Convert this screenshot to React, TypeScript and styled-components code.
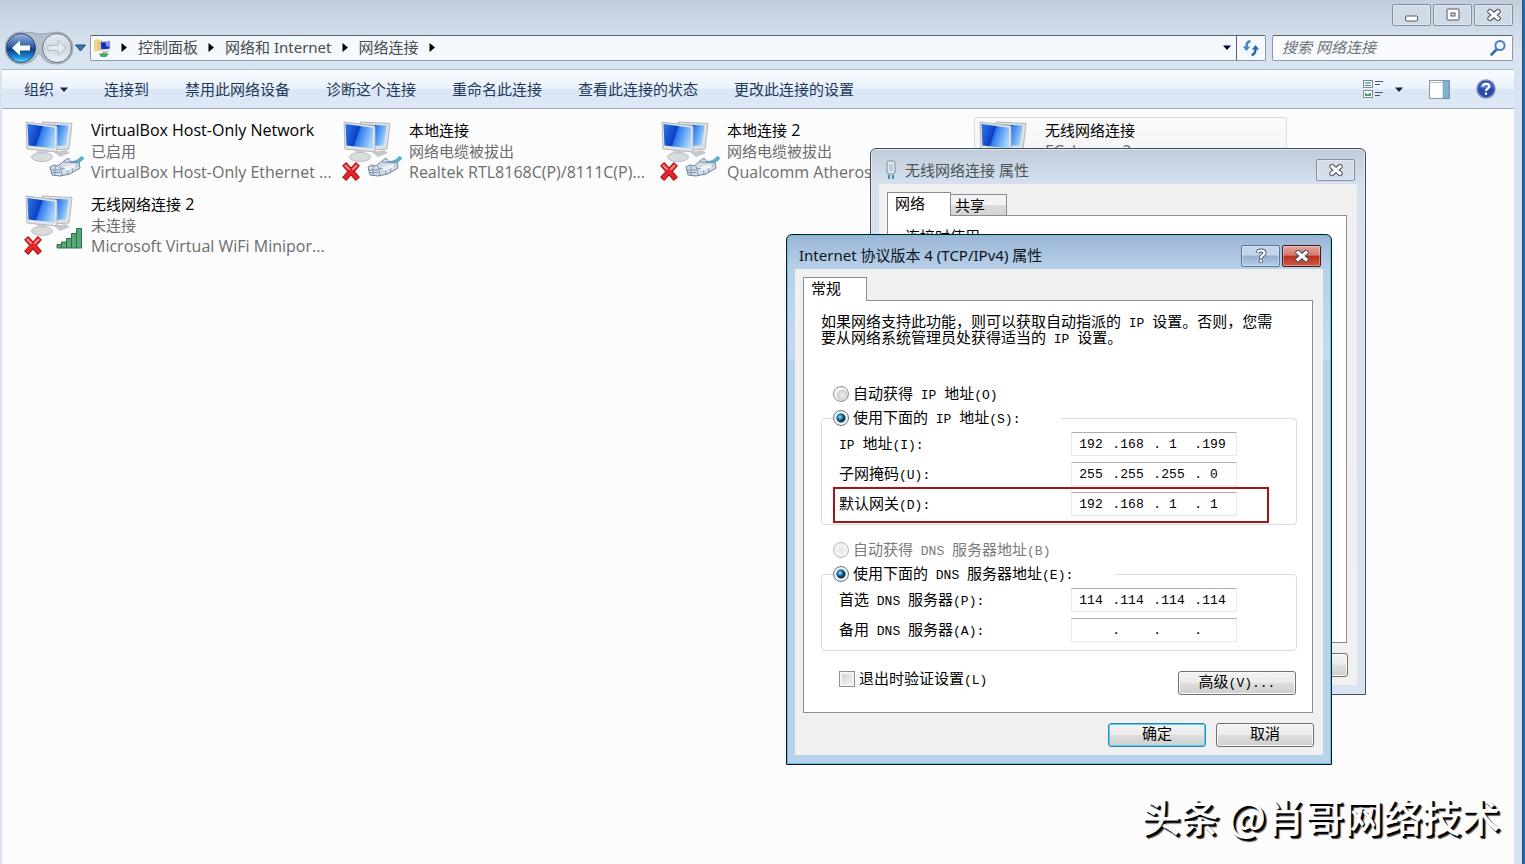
import React from "react";
import styled, { createGlobalStyle, css } from "styled-components";

const UI_FONT = `"Noto Sans", "Noto Sans CJK SC", sans-serif`;

const GlobalStyle = createGlobalStyle`
  * { box-sizing: border-box; }
  body {
    margin: 0;
    font: 15px/21px ${UI_FONT};
    color: #000;
    background: #1a6bb5;
  }
  button, input { font: inherit; color: inherit; margin: 0; padding: 0; }
`;

/* ---------- explorer window ---------- */

const Desktop = styled.div`
  position: relative;
  min-height: 100vh;
  display: flex;
  overflow: hidden;
`;

const Explorer = styled.div`
  flex: 1;
  display: flex;
  flex-direction: column;
  padding: 0 8px 0 2px;
  margin-right: 2px;
  border-right: 1px solid #3d4f63;
  background: linear-gradient(#c1cddb 0, #cbd7e4 20px, #d9e4f1 50px, #d6e3f2 110px);
`;

const CaptionBar = styled.div`
  display: flex;
  justify-content: flex-end;
  gap: 2px;
  padding: 4px 1px 0 0;
  height: 30px;
`;

const CaptionButton = styled.button<{ $tone?: "plain" | "active" | "danger" }>`
  width: 39px;
  height: 22px;
  display: flex;
  align-items: center;
  justify-content: center;
  border-radius: 2px;
  border: 1px solid #8290a4;
  background: linear-gradient(rgba(255, 255, 255, 0.25), rgba(255, 255, 255, 0.05));
  box-shadow: inset 0 0 0 1px rgba(255, 255, 255, 0.35);
  ${(p) =>
    p.$tone === "active" &&
    css`
      border-color: #5a7393;
      background: linear-gradient(#c3d6eb 0 45%, #94b0d0 50%, #b4cfeb);
    `}
  ${(p) =>
    p.$tone === "danger" &&
    css`
      border-color: #431d22;
      background: linear-gradient(#e3a69b 0, #d27a6c 46%, #b92f1f 50%, #cf5a42);
    `}
`;

const NavRow = styled.div`
  display: flex;
  align-items: center;
  height: 39px;
  padding: 0 1px 4px 3px;
`;

const NavButtons = styled.div`
  display: flex;
  align-items: center;
  width: 85px;
`;

const GhostButton = styled.button`
  display: flex;
  border: 0;
  background: none;
`;

const AddressBar = styled.div`
  flex: 1;
  display: flex;
  align-items: center;
  height: 26px;
  border: 1px solid #8d9aa9;
  border-top-color: #56606b;
  border-radius: 2px;
  background: #f5f8fc;
`;

const Crumbs = styled.nav`
  flex: 1;
  display: flex;
  align-items: center;
  padding-left: 2px;
`;

const Crumb = styled.a`
  color: #474c52;
  text-decoration: none;
  white-space: nowrap;
`;

const Arrow = styled.svg`
  width: 7px;
  height: 9px;
  margin: 0 10px;
  flex: none;
`;

const HistoryButton = styled(GhostButton)`
  padding-right: 5px;
`;

const RefreshButton = styled(GhostButton)`
  width: 29px;
  height: 24px;
  align-items: center;
  justify-content: center;
  border-left: 1px solid #56606b;
`;

const SearchBox = styled.label`
  width: 241px;
  height: 26px;
  margin-left: 6px;
  padding: 0 5px 0 9px;
  display: flex;
  align-items: center;
  border: 1px solid #8d9aa9;
  border-top-color: #56606b;
  border-radius: 2px;
  background: #f8fafd;
`;

const SearchInput = styled.input`
  flex: 1;
  min-width: 0;
  border: 0;
  outline: 0;
  background: none;
  font-style: italic;
  &::placeholder { color: #6d747c; opacity: 1; }
`;

const Toolbar = styled.div`
  display: flex;
  align-items: center;
  height: 40px;
  padding: 0 18px 0 22px;
  gap: 36px;
  color: #1e395b;
  border-top: 1px solid #a9b9cc;
  border-bottom: 1px solid #a0afc3;
  background: linear-gradient(#fbfdff 0, #e9f1fb 48%, #dce7f5 52%, #dde7f5);
`;

const ToolButton = styled.button<{ $gap?: number }>`
  display: flex;
  align-items: center;
  gap: ${(p) => p.$gap ?? 6}px;
  border: 0;
  background: none;
  white-space: nowrap;
`;

const ToolIcons = styled.div`
  display: flex;
  align-items: center;
  gap: 26px;
  margin-left: auto;
`;

const Content = styled.main`
  flex: 1;
  padding: 8px 0 0 18px;
  background: #fcfcfc;
  display: grid;
  grid-template-columns: repeat(auto-fill, 313px);
  grid-auto-rows: 70px;
  gap: 4px 5px;
  align-content: start;
`;

const Connection = styled.article<{ $hover?: boolean }>`
  display: flex;
  gap: 3px;
  padding: 1px 0 0 1px;
  border: 1px solid ${(p) => (p.$hover ? "#dcdcdc" : "transparent")};
  border-radius: 2px;
  background: ${(p) => (p.$hover ? "linear-gradient(#fafafa, #efefef)" : "none")};
  white-space: nowrap;
`;

const ConnText = styled.div`
  padding-top: 1px;
  color: #6d6d6d;
  h3 { margin: 0; font: inherit; color: #000; }
  p { margin: 0; }
`;

const Latin = styled.span`
  font-family: "Open Sans", sans-serif;
  font-size: 16px;
  line-height: 0;
`;

/* ---------- dialogs ---------- */

const Dialog = styled.section<{ $active?: boolean }>`
  position: absolute;
  display: flex;
  flex-direction: column;
  padding: 0 8px 9px;
  border: 1px solid ${(p) => (p.$active ? "#10161d" : "#454f5c")};
  border-radius: 6px 6px 0 0;
  background: ${(p) =>
    p.$active
      ? "linear-gradient(#9ab5d5 0, #b9d0ea 34px, #c4dbf2 124px, #b9d1ea 125px)"
      : "linear-gradient(#c0ccda 0, #d5e1ee 36px, #d7e4f2)"};
  box-shadow: inset 0 0 0 1px ${(p) => (p.$active ? "#5fc5e4" : "#dfe9f4")};
  ${(p) =>
    p.$active
      ? css`left: 786px; top: 234px; width: 546px;`
      : css`left: 870px; top: 148px; width: 496px; height: 547px;`}
`;

const DialogTitle = styled.header<{ $dim?: boolean }>`
  display: flex;
  align-items: center;
  height: ${(p) => (p.$dim ? 35 : 34)}px;
  padding: 7px 2px 0 ${(p) => (p.$dim ? 6 : 4)}px;
  gap: 2px;
  flex: none;
  color: ${(p) => (p.$dim ? "#4b5258" : "#0c1420")};
  h2 {
    flex: 1;
    margin: 0;
    font: inherit;
    padding-left: ${(p) => (p.$dim ? 6 : 0)}px;
  }
  svg { flex: none; }
`;

const DialogBody = styled.div`
  flex: 1;
  display: flex;
  flex-direction: column;
  padding: 8px 10px 8px 8px;
  background: #f0f0f0;
`;

const Tabs = styled.div`
  display: flex;
  align-items: flex-end;
  height: 23px;
  flex: none;
`;

const Tab = styled.button<{ $on?: boolean }>`
  height: ${(p) => (p.$on ? 24 : 21)}px;
  width: ${(p) => (p.$on ? 64 : 56)}px;
  padding: 0 0 4px ${(p) => (p.$on ? 7 : 4)}px;
  margin-bottom: ${(p) => (p.$on ? -1 : 0)}px;
  border: 1px solid #898c95;
  border-bottom: 0;
  border-left-width: ${(p) => (p.$on ? 1 : 0)}px;
  position: relative;
  text-align: left;
  background: ${(p) => (p.$on ? "#fff" : "linear-gradient(#f3f3f3 0 50%, #dcdcdc 50%, #d4d4d4)")};
`;

const Panel = styled.div`
  flex: 1;
  display: flex;
  flex-direction: column;
  padding: 12px 15px 17px 17px;
  border: 1px solid #898c95;
  background: #fff;
`;

const Actions = styled.div`
  display: flex;
  justify-content: flex-end;
  gap: 10px;
  margin: 10px -1px 0 0;
`;

const PushButton = styled.button<{ $primary?: boolean; $wide?: boolean }>`
  width: ${(p) => (p.$wide ? 118 : 98)}px;
  height: 24px;
  flex: none;
  display: flex;
  align-items: center;
  justify-content: center;
  padding-bottom: 1px;
  border: 1px solid ${(p) => (p.$primary ? "#2f86b8" : "#707070")};
  border-radius: 3px;
  background: linear-gradient(#f3f3f3 0, #ebebeb 48%, #dddddd 52%, #cfcfcf);
  box-shadow: inset 0 0 0 1px ${(p) => (p.$primary ? "#55d0f5" : "#fafafa")};
`;

/* Bitmap-style interface face: full-width characters with half-width Latin. */
const SongText = styled.span`
  margin-bottom: 3px;
  font: 15px/16px "Noto Sans CJK SC", sans-serif;
  white-space: pre;
`;

const Half = styled.span`
  font-family: "Liberation Mono", monospace;
  font-size: 13px;
  line-height: 0;
`;

/* Sets the ASCII runs of a mixed string in their own face. */
function mixed(text: string, Face: React.ElementType) {
  return text.split(/([\x20-\x7e]+)/).map((part, i) => (i % 2 ? <Face key={i}>{part}</Face> : part));
}

function Song({ children }: { children: string }) {
  return <SongText>{mixed(children, Half)}</SongText>;
}

const Intro = styled.p`
  margin: 0 0 36px;
  display: flex;
  flex-direction: column;
  ${SongText} { margin: 0; }
`;

const Choice = styled.label<{ $off?: boolean; $tall?: boolean; $indent?: boolean }>`
  display: flex;
  align-items: center;
  gap: 4px;
  height: ${(p) => (p.$tall ? 26 : 16)}px;
  margin-left: ${(p) => (p.$indent ? 12 : 0)}px;
  color: ${(p) => (p.$off ? "#7a7a7a" : "#000")};
`;

const Radio = styled.input`
  appearance: none;
  width: 16px;
  height: 16px;
  border-radius: 50%;
  border: 1px solid #8e8f8f;
  background: radial-gradient(circle at 60% 60%, #f0f0f0 0, #cfcfcf 5px, #f4f4f4 6px);
  &:checked {
    border-color: #6b7780;
    background: radial-gradient(circle at 6px 6px, #a8ecfc 0, #2b8fc2 2px, transparent 4px),
      radial-gradient(circle at 7px 7px, #0b3a5c 4px, transparent 5px), #eef1f3;
  }
  &:disabled { border-color: #b8b8b8; background: radial-gradient(circle, #e6e6e6 0, #f4f4f4 6px); }
`;

const Check = styled.input`
  appearance: none;
  width: 16px;
  height: 16px;
  border: 1px solid #8e8f8f;
  background: linear-gradient(135deg, #cbcfd5, #f6f6f6);
  box-shadow: inset 0 0 0 2px #f4f4f4;
`;

const Group = styled.fieldset<{ $spaced?: boolean }>`
  min-width: 0;
  margin: 0 0 ${(p) => (p.$spaced ? 12 : 0)}px;
  padding: 0 0 5px 17px;
  border: 1px solid #dcdcdc;
  border-radius: 4px;
`;

const GroupLegend = styled.legend<{ $width: number }>`
  display: flex;
  align-items: center;
  width: ${(p) => p.$width}px;
  height: 22px;
  margin-left: -6px;
  padding: 0;
`;

const FieldRow = styled.div<{ $marked?: boolean }>`
  position: relative;
  display: flex;
  align-items: center;
  height: 30px;
  ${(p) =>
    p.$marked &&
    css`
      &::after {
        content: "";
        position: absolute;
        inset: -2px 27px -4px -6px;
        border: 2px solid #a31515;
        pointer-events: none;
      }
    `}
`;

const FieldLabel = styled.span`
  width: 232px;
  display: flex;
`;

const IpBox = styled.div`
  display: flex;
  align-items: center;
  width: 166px;
  height: 24px;
  padding-left: 7px;
  border: 1px solid #e3e9ef;
  border-top-color: #abadb3;
  font: 13px/15px "Liberation Mono", monospace;
`;

const Octet = styled.input`
  width: 24px;
  border: 0;
  outline: 0;
  background: none;
  text-align: center;
`;

const Dot = styled.span`
  width: 17px;
  text-align: right;
`;

const Bottom = styled.div`
  display: flex;
  justify-content: space-between;
  align-items: flex-start;
  padding: 20px 1px 0 18px;
`;

const Watermark = styled.div`
  position: absolute;
  right: 25px;
  bottom: 21px;
  font: 500 39px/56px "Noto Sans CJK SC", sans-serif;
  color: #fcfcfc;
  text-shadow: 2px 2px 0 #000, 3px 3px 1px #444;
  white-space: nowrap;
`;

/* ---------- drawings ---------- */

const CloseGlyph = () => (
  <svg width="16" height="14" viewBox="0 0 16 14">
    <path d="M4 3.500L12 10.500M12 3.500L4 10.500" stroke="#4f5561" strokeWidth="5.400" strokeLinecap="round" />
    <path d="M4 3.500L12 10.500M12 3.500L4 10.500" stroke="#fff" strokeWidth="3" strokeLinecap="square" />
  </svg>
);

const HelpGlyph = () => (
  <svg width="12" height="16" viewBox="0 0 12 16" fill="none">
    <path d="M2.500 5Q3 2.500 6 2.500Q9.500 2.500 9.500 5Q9.500 6.500 7.500 7.500Q6 8.300 6 10.500M6 11.500V14.500" stroke="#4f5561" strokeWidth="4" />
    <path d="M2.500 4.500Q3 2.500 6 2.500Q9.500 2.500 9.500 5Q9.500 6.500 7.500 7.500Q6 8.300 6 10M6 11.700V14" stroke="#fff" strokeWidth="2.200" />
  </svg>
);

const Triangle = ({ color = "#16243c" }: { color?: string }) => (
  <svg width="8" height="5" viewBox="0 0 8 5">
    <path d="M0 0.500H8L4 5Z" fill={color} />
  </svg>
);

const CrumbArrow = () => (
  <Arrow viewBox="0 0 7 9">
    <path d="M0.500 0L6 4.500L0.500 9Z" fill="#000" />
  </Arrow>
);

const NavDrawing = () => (
  <svg width="70" height="34" viewBox="0 0 70 34" fill="none">
    <defs>
      <linearGradient id="back" x1="0" y1="0" x2="0" y2="1">
        <stop offset="0" stopColor="#9fb6dc" />
        <stop offset="0.45" stopColor="#2f5ea8" />
        <stop offset="0.55" stopColor="#123f86" />
        <stop offset="0.8" stopColor="#1c86cf" />
        <stop offset="1" stopColor="#5fe4fb" />
      </linearGradient>
      <linearGradient id="fwd" x1="0" y1="0" x2="0" y2="1">
        <stop offset="0" stopColor="#e5eaf0" />
        <stop offset="0.500" stopColor="#cfd7e0" />
        <stop offset="1" stopColor="#eef3f8" />
      </linearGradient>
    </defs>
    <path d="M16 1Q26 1 34 3Q42 3 52 1A16 16 0 0 1 52 33Q40 33 36 24Q34 21 32 24Q28 33 16 33A16 16 0 0 1 16 1Z" fill="#b4bfcc" stroke="#9aa5b3" />
    <circle cx="16" cy="17" r="14.500" fill="url(#back)" stroke="#2a4470" />
    <path d="M7 17L15 9.500V14.500H25V19.500H15V24.500Z" fill="#fff" />
    <circle cx="52" cy="17" r="14.500" fill="url(#fwd)" stroke="#6b7480" />
    <path d="M61 17L53 9.500V14.500H43V19.500H53V24.500Z" fill="#e4e9ee" stroke="#b4bcc5" />
  </svg>
);

const FolderNetIcon = () => (
  <svg width="18" height="20" viewBox="0 0 18 20">
    <path d="M1 2L6 1V12L1 14Z" fill="#f1d58a" />
    <path d="M5 3L9 2V12L5 13Z" fill="#e9c468" />
    <path d="M7 4L17 3V11L8 12Z" fill="#1b2fb4" stroke="#cfd6e6" />
    <path d="M12 4L17 3V8L14 9Z" fill="#7d9dea" />
    <path d="M9 13H16L14 15H10Z" fill="#b9c2cf" />
    <path d="M6 16Q10 14 16 16L13 19H8Z" fill="#3fae62" />
  </svg>
);

const RefreshIcon = () => (
  <svg width="18" height="18" viewBox="0 0 18 18" fill="none">
    <path d="M8.500 2Q4.500 2.500 4.500 8" stroke="#3f86c9" strokeWidth="2.400" />
    <path d="M0.800 7.500H8.200L4.500 12Z" fill="#3f86c9" />
    <path d="M9.500 16Q13.500 15.500 13.500 10" stroke="#2c66ad" strokeWidth="2.400" />
    <path d="M9.800 10.500H17.200L13.500 6Z" fill="#2c66ad" />
  </svg>
);

const SearchIcon = () => (
  <svg width="18" height="18" viewBox="0 0 18 18" fill="none">
    <path d="M8 10L2.500 15.500" stroke="#3769ad" strokeWidth="2.600" strokeLinecap="round" />
    <circle cx="11" cy="6.500" r="4.600" fill="#eef6fd" stroke="#4a7fc1" strokeWidth="2" />
  </svg>
);

const ViewIcon = () => (
  <svg width="22" height="20" viewBox="0 0 22 20" fill="none">
    <rect x="0.500" y="1.500" width="9" height="7" fill="#fff" stroke="#7e8b99" />
    <rect x="0.500" y="11.500" width="9" height="7" fill="#fff" stroke="#7e8b99" />
    <path d="M2 4H8" stroke="#63a4d6" strokeWidth="1.500" />
    <path d="M2 6.500H8" stroke="#4b9b5a" />
    <path d="M2 17V13.500L4.500 15.500L8 13.500V17Z" fill="#4b9b5a" />
    <path d="M12 2.500H20M12 5.500H17M12 13.500H20M12 16.500H17" stroke="#43597a" />
  </svg>
);

const PaneIcon = () => (
  <svg width="21" height="19" viewBox="0 0 21 19">
    <rect x="0.500" y="0.500" width="20" height="18" fill="#fff" stroke="#8695a8" />
    <path d="M1 2.500H14" stroke="#b7c4d4" />
    <rect x="14" y="1" width="6" height="17" fill="#7fb7d2" stroke="#5d93b3" strokeWidth="0.500" />
  </svg>
);

const HelpIcon = () => (
  <svg width="20" height="20" viewBox="0 0 20 20" fill="none">
    <circle cx="10" cy="10" r="9" fill="#2c49ac" stroke="#7f8fb8" strokeWidth="1.500" />
    <path d="M3 8A7.500 7.500 0 0 1 17 8Q10 11 3 8Z" fill="#5878cf" />
    <path d="M6.800 7.500Q7 4.800 10 4.800Q13.200 4.800 13.200 7.300Q13.200 8.800 11.500 9.800Q10 10.700 10 12M10 13.500V15.800" stroke="#fff" strokeWidth="2.200" />
  </svg>
);

type Badge = "plug" | "unplugged" | "nosignal" | "signal";

const ConnSvg = styled.svg`
  flex: none;
`;

const ConnIcon = ({ badge }: { badge: Badge }) => (
  <ConnSvg width="66" height="64" viewBox="0 0 66 64" fill="none">
    <defs>
      <linearGradient id="screen" x1="0" y1="0.3" x2="1" y2="0.6">
        <stop offset="0" stopColor="#2a6fe2" />
        <stop offset="0.420" stopColor="#0b3fc4" />
        <stop offset="0.480" stopColor="#2f7cf0" />
        <stop offset="1" stopColor="#a9d8fb" />
      </linearGradient>
    </defs>
    <path d="M32 33L44 31L48 34L38 38Z" fill="#c5c8cc" />
    <path d="M20 3L50 4.500L47 30L30 31Z" fill="#dfe2e4" stroke="#b2b7bc" />
    <path d="M23 5.500L46.500 6.500L44 26.500L31 27Z" fill="url(#screen)" />
    <path d="M15 31H25L25 38H15Z" fill="#d3d6d8" />
    <ellipse cx="20" cy="38" rx="10.500" ry="4.500" fill="#d9dbdc" stroke="#bcc0c3" />
    <path d="M4 3L35 7V33L5 30Z" fill="#e3e5e7" stroke="#b2b7bc" />
    <path d="M5.500 5L33 8.700V29.500L6.500 26.500Z" fill="url(#screen)" />
    {(badge === "plug" || badge === "unplugged") && (
      <g>
        <path d="M48 44Q55 45 61 38" stroke="#5ab3cb" strokeWidth="4" />
        <path d="M28 48L32 46L36 47L42 42L46 39L49 43L57 43L58 49L48 55L38 57L30 56Z" fill="#d3dde9" stroke="#6f8398" />
        <path d="M29 51H38M29 53.500H38M33 47V56M38 47L40 56M42 43L56 44M38 50L55 47M45 49L46 55M50 47L51 53" stroke="#8296ac" />
        <path d="M42 48L53 45L54 48L44 52Z" fill="#edf3fa" />
      </g>
    )}
    {(badge === "nosignal" || badge === "signal") && (
      <path d="M35 55V51.500H39.500V49H44.500V45.500H49.500V40.500H54.500V35.500H59.500V55ZM39.500 51V55M44.500 48V55M49.500 45V55M54.500 40V55" fill="#59a877" stroke="#2d7048" />
    )}
    {(badge === "unplugged" || badge === "nosignal") && (
      <g>
        <path d="M6 47L16 58M16 47L6 58" stroke="#a80d12" strokeWidth="5.600" strokeLinecap="square" />
        <path d="M6 47L16 58M16 47L6 58" stroke="#e3262b" strokeWidth="4" strokeLinecap="square" />
        <path d="M5.500 46.500L9 50M16.500 46.500L13 50" stroke="#f58a86" strokeWidth="2" strokeLinecap="round" />
      </g>
    )}
  </ConnSvg>
);

const AdapterIcon = () => (
  <svg width="12" height="20" viewBox="0 0 12 20" fill="none">
    <rect x="2" y="1" width="8" height="13" rx="2" fill="#dfe7ee" stroke="#7d8c9c" />
    <path d="M5 4V11M7 4V11" stroke="#9fb0c0" />
    <path d="M4 15V19M8 15V19" stroke="#3f93ae" strokeWidth="2" />
  </svg>
);

/* ---------- content ---------- */

const commands = ["连接到", "禁用此网络设备", "诊断这个连接", "重命名此连接", "查看此连接的状态", "更改此连接的设置"];

const connections: { name: string; status: string; device: string; badge: Badge; hover?: boolean }[] = [
  { name: "VirtualBox Host-Only Network", status: "已启用", device: "VirtualBox Host-Only Ethernet ...", badge: "plug" },
  { name: "本地连接", status: "网络电缆被拔出", device: "Realtek RTL8168C(P)/8111C(P)...", badge: "unplugged" },
  { name: "本地连接 2", status: "网络电缆被拔出", device: "Qualcomm Atheros", badge: "unplugged" },
  { name: "无线网络连接", status: "FG_home_2", device: "", badge: "signal", hover: true },
  { name: "无线网络连接 2", status: "未连接", device: "Microsoft Virtual WiFi Minipor...", badge: "nosignal" },
];

function IpField({ label, value, marked }: { label: string; value: string[]; marked?: boolean }) {
  return (
    <FieldRow $marked={marked} role="group" aria-label={label}>
      <FieldLabel>
        <Song>{label}</Song>
      </FieldLabel>
      <IpBox>
        {value.map((octet, i) => (
          <React.Fragment key={i}>
            {i > 0 && <Dot>.</Dot>}
            <Octet aria-label={`${label} ${i + 1}`} defaultValue={octet} />
          </React.Fragment>
        ))}
      </IpBox>
    </FieldRow>
  );
}

function AdapterDialog() {
  return (
    <Dialog aria-label="无线网络连接 属性">
      <DialogTitle $dim>
        <AdapterIcon />
        <h2>无线网络连接 属性</h2>
        <CaptionButton aria-label="关闭"><CloseGlyph /></CaptionButton>
      </DialogTitle>
      <DialogBody>
        <Tabs>
          <Tab $on><Song>网络</Song></Tab>
          <Tab><Song>共享</Song></Tab>
        </Tabs>
        <Panel><Song>连接时使用:</Song></Panel>
        <Actions>
          <PushButton><Song>确定</Song></PushButton>
          <PushButton><Song>取消</Song></PushButton>
        </Actions>
      </DialogBody>
    </Dialog>
  );
}

function Ipv4Dialog() {
  return (
    <Dialog $active aria-label="Internet 协议版本 4 (TCP/IPv4) 属性">
      <DialogTitle>
        <h2>Internet 协议版本 4 (TCP/IPv4) 属性</h2>
        <CaptionButton $tone="active" aria-label="帮助"><HelpGlyph /></CaptionButton>
        <CaptionButton $tone="danger" aria-label="关闭"><CloseGlyph /></CaptionButton>
      </DialogTitle>
      <DialogBody>
        <Tabs>
          <Tab $on><Song>常规</Song></Tab>
        </Tabs>
        <Panel>
          <Intro>
            <Song>如果网络支持此功能，则可以获取自动指派的 IP 设置。否则，您需</Song>
            <Song>要从网络系统管理员处获得适当的 IP 设置。</Song>
          </Intro>
          <Choice $tall $indent>
            <Radio type="radio" name="ip" />
            <Song>自动获得 IP 地址(O)</Song>
          </Choice>
          <Group $spaced>
            <GroupLegend $width={228}>
              <Choice>
                <Radio type="radio" name="ip" defaultChecked />
                <Song>使用下面的 IP 地址(S):</Song>
              </Choice>
            </GroupLegend>
            <IpField label="IP 地址(I):" value={["192", "168", "1", "199"]} />
            <IpField label="子网掩码(U):" value={["255", "255", "255", "0"]} />
            <IpField label="默认网关(D):" value={["192", "168", "1", "1"]} marked />
          </Group>
          <Choice $tall $indent $off>
            <Radio type="radio" name="dns" disabled />
            <Song>自动获得 DNS 服务器地址(B)</Song>
          </Choice>
          <Group>
            <GroupLegend $width={282}>
              <Choice>
                <Radio type="radio" name="dns" defaultChecked />
                <Song>使用下面的 DNS 服务器地址(E):</Song>
              </Choice>
            </GroupLegend>
            <IpField label="首选 DNS 服务器(P):" value={["114", "114", "114", "114"]} />
            <IpField label="备用 DNS 服务器(A):" value={["", "", "", ""]} />
          </Group>
          <Bottom>
            <Choice>
              <Check type="checkbox" />
              <Song>退出时验证设置(L)</Song>
            </Choice>
            <PushButton $wide><Song>高级(V)...</Song></PushButton>
          </Bottom>
        </Panel>
        <Actions>
          <PushButton $primary><Song>确定</Song></PushButton>
          <PushButton><Song>取消</Song></PushButton>
        </Actions>
      </DialogBody>
    </Dialog>
  );
}

export default function App() {
  return (
    <Desktop>
      <GlobalStyle />
      <Explorer>
        <CaptionBar>
          <CaptionButton aria-label="最小化">
            <svg width="14" height="14" viewBox="0 0 14 14">
              <rect x="0.500" y="8" width="12" height="5" rx="1" fill="#fff" stroke="#4f5561" />
            </svg>
          </CaptionButton>
          <CaptionButton aria-label="最大化">
            <svg width="14" height="14" viewBox="0 0 14 14">
              <rect x="1" y="1" width="12" height="11" rx="1" fill="#fff" stroke="#4f5561" />
              <rect x="5" y="5" width="4" height="3" fill="#dfe6ef" stroke="#4f5561" />
            </svg>
          </CaptionButton>
          <CaptionButton aria-label="关闭"><CloseGlyph /></CaptionButton>
        </CaptionBar>
        <NavRow>
          <NavButtons>
            <GhostButton aria-label="后退"><NavDrawing /></GhostButton>
            <GhostButton aria-label="最近的页面">
              <svg width="11" height="8" viewBox="0 0 11 8">
                <path d="M0.500 1H10.500L5.500 7Z" fill="#3b78ad" stroke="#1d4b78" />
              </svg>
            </GhostButton>
          </NavButtons>
          <AddressBar>
            <Crumbs>
              <FolderNetIcon />
              <CrumbArrow />
              <Crumb href="#control-panel">控制面板</Crumb>
              <CrumbArrow />
              <Crumb href="#network">网络和 Internet</Crumb>
              <CrumbArrow />
              <Crumb href="#connections">网络连接</Crumb>
              <CrumbArrow />
            </Crumbs>
            <HistoryButton aria-label="历史记录"><Triangle color="#000033" /></HistoryButton>
            <RefreshButton aria-label="刷新"><RefreshIcon /></RefreshButton>
          </AddressBar>
          <SearchBox>
            <SearchInput aria-label="搜索 网络连接" placeholder="搜索 网络连接" />
            <SearchIcon />
          </SearchBox>
        </NavRow>
        <Toolbar>
          <ToolButton>组织<Triangle /></ToolButton>
          {commands.map((c) => (
            <ToolButton key={c}>{c}</ToolButton>
          ))}
          <ToolIcons>
            <ToolButton $gap={10} aria-label="更改视图"><ViewIcon /><Triangle /></ToolButton>
            <ToolButton aria-label="预览窗格"><PaneIcon /></ToolButton>
            <ToolButton aria-label="帮助"><HelpIcon /></ToolButton>
          </ToolIcons>
        </Toolbar>
        <Content>
          {connections.map((c) => (
            <Connection key={c.name} $hover={c.hover}>
              <ConnIcon badge={c.badge} />
              <ConnText>
                <h3>{mixed(c.name, Latin)}</h3>
                <p>{mixed(c.status, Latin)}</p>
                <p>{mixed(c.device, Latin)}</p>
              </ConnText>
            </Connection>
          ))}
        </Content>
      </Explorer>
      <AdapterDialog />
      <Ipv4Dialog />
      <Watermark>头条 @肖哥网络技术</Watermark>
    </Desktop>
  );
}
